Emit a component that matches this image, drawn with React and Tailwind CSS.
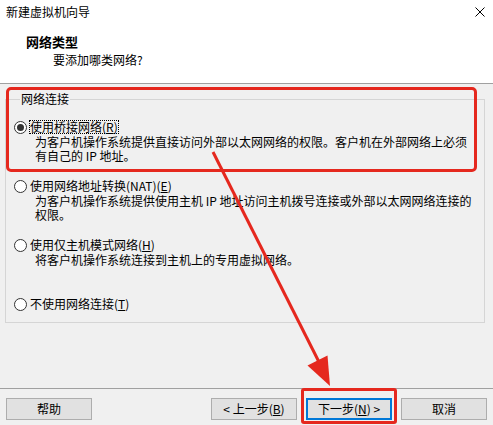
import React from "react";

function Radio({ checked }) {
  return (
    <span className="flex h-[13px] w-[13px] shrink-0 items-center justify-center rounded-full border border-[#333333] bg-white">
      {checked ? <span className="h-[7px] w-[7px] rounded-full bg-[#333333]" /> : null}
    </span>
  );
}

function Btn({ children, primary }) {
  return (
    <div
      className={
        "flex h-[22px] w-[86px] items-center justify-center bg-[#e1e1e1] text-[12px] leading-[14px] text-black " +
        (primary ? "border-2 border-[#0078d7]" : "border border-[#adadad]")
      }
    >
      {children}
    </div>
  );
}

export default function App() {
  return (
    <div className="relative flex h-[425px] w-[493px] flex-col overflow-hidden bg-[#f0f0f0] font-[family-name:'Noto_Sans_CJK_SC',sans-serif] text-[12px] leading-[14px] text-black">
      {/* header */}
      <div className="flex h-[83px] flex-col bg-white">
        <div className="flex items-start justify-between pl-[6px] pr-[8px] pt-[5px]">
          <span className="leading-[14px]">新建虚拟机向导</span>
          <svg width="10" height="10" viewBox="0 0 10 10" className="mt-[2px]">
            <path d="M0.5 0.5 L9.5 9.5 M9.5 0.5 L0.5 9.5" stroke="#000" strokeWidth="1" fill="none" />
          </svg>
        </div>
        <div className="mt-[15px] pl-[26px] text-[13px] font-bold leading-[16px]">网络类型</div>
        <div className="mt-[3px] pl-[53px] leading-[14px]">要添加哪类网络?</div>
      </div>
      <div className="h-px bg-[#a0a0a0]" />

      {/* group box */}
      <fieldset className="ml-[5px] mt-[8px] w-[480px] border border-[#d5d5d5] pb-[11px] pl-[8px] pt-[14px]">
        <legend className="ml-[6px] px-[1px] leading-[14px]">网络连接</legend>

        <div className="flex items-center gap-[2px]">
          <Radio checked />
          <span className="border border-dotted border-black leading-[12px]">
            使用桥接网络(<span className="underline">R</span>)
          </span>
        </div>
        <div className="mt-[1px] whitespace-nowrap pl-[21px]">
          为客户机操作系统提供直接访问外部以太网网络的权限。客户机在外部网络上必须
          <br />
          有自己的 IP 地址。
        </div>

        <div className="mt-[16px] flex items-center gap-[2px]">
          <Radio />
          <span className="border border-transparent leading-[12px]">
            使用网络地址转换(NAT)(<span className="underline">E</span>)
          </span>
        </div>
        <div className="mt-[1px] whitespace-nowrap pl-[21px]">
          为客户机操作系统提供使用主机 IP 地址访问主机拨号连接或外部以太网网络连接的
          <br />
          权限。
        </div>

        <div className="mt-[16px] flex items-center gap-[2px]">
          <Radio />
          <span className="border border-transparent leading-[12px]">
            使用仅主机模式网络(<span className="underline">H</span>)
          </span>
        </div>
        <div className="mt-[1px] whitespace-nowrap pl-[21px]">将客户机操作系统连接到主机上的专用虚拟网络。</div>

        <div className="mt-[30px] flex items-center gap-[2px]">
          <Radio />
          <span className="border border-transparent leading-[12px]">
            不使用网络连接(<span className="underline">T</span>)
          </span>
        </div>
      </fieldset>

      {/* footer */}
      <div className="mt-auto">
        <div className="h-px bg-[#a0a0a0]" />
        <div className="mb-[5px] mt-[9px] flex items-center pr-[6px] pl-[6px]">
          <Btn>帮助</Btn>
          <div className="flex-1" />
          <div className="flex gap-[9px]">
            <Btn>
              &lt; 上一步(<span className="underline">B</span>)
            </Btn>
            <Btn primary>
              下一步(<span className="underline">N</span>) &gt;
            </Btn>
            <Btn>取消</Btn>
          </div>
        </div>
      </div>

      {/* annotations */}
      <div className="pointer-events-none absolute left-[6px] top-[87px] h-[85px] w-[471px] rounded-[5px] border-[3px] border-[#e5281e]" />
      <div className="pointer-events-none absolute left-[301px] top-[388px] h-[36px] w-[96px] rounded-[3px] border-[3px] border-[#e5281e]" />
      <svg className="pointer-events-none absolute left-0 top-0" width="493" height="425" viewBox="0 0 493 425">
        <line x1="213" y1="152" x2="319" y2="362" stroke="#e5281e" strokeWidth="3" />
        <polygon points="330,386 327.5,355.5 307.5,365.5" fill="#e5281e" />
      </svg>
    </div>
  );
}
